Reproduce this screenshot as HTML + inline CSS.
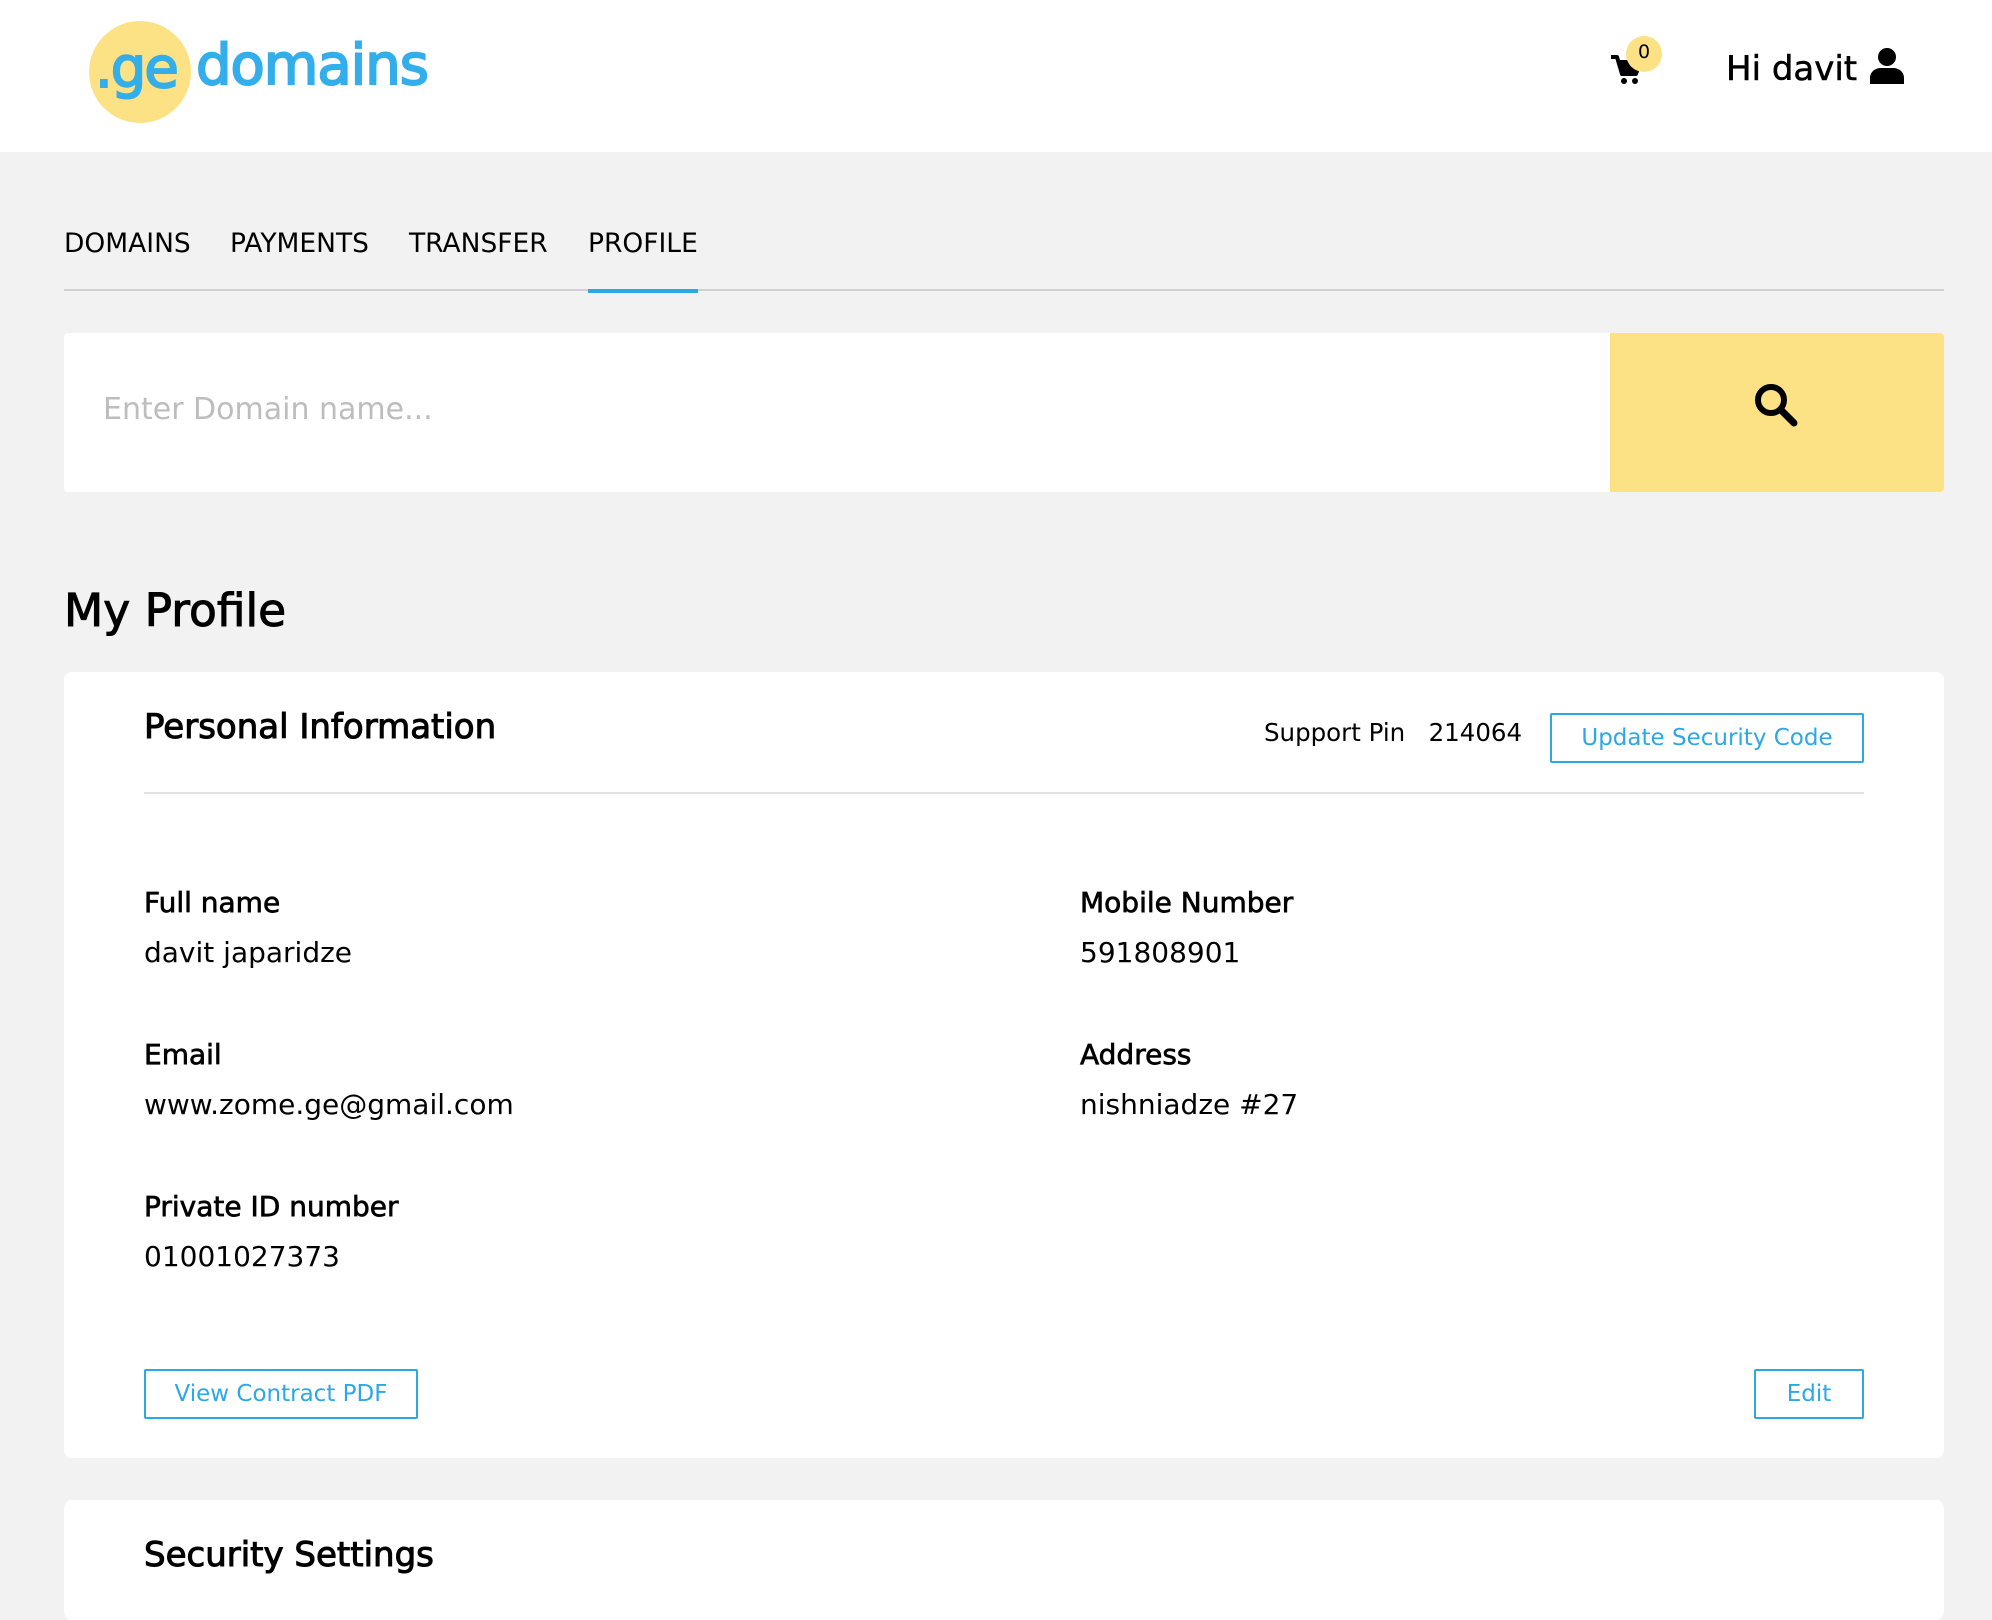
<!DOCTYPE html>
<html><head><meta charset="utf-8"><style>
*{margin:0;padding:0;box-sizing:border-box}
body{width:1992px;height:1582px;overflow:hidden;background:#f2f2f2;font-family:"DejaVu Sans","Liberation Sans",sans-serif;color:#000;position:relative}
.a{position:absolute;white-space:nowrap}
header{position:absolute;left:0;top:0;width:1992px;height:152px;background:#fff}
.btn{position:absolute;border:2px solid #2ea7e6;color:#2ea7e6;font-size:23px;display:flex;align-items:center;justify-content:center;background:#fff;border-radius:2px}
.lbl{font-size:28px;-webkit-text-stroke:0.7px #000}
.val{font-size:28px}
.h{-webkit-text-stroke:1px #000}
</style></head><body>
<header>
 <div class="a" style="left:89px;top:21px;width:102px;height:102px;border-radius:50%;background:#fde285"></div>
 <div class="a" style="left:95px;top:36px;font-size:56px;color:#33aeea;-webkit-text-stroke:2px #33aeea;letter-spacing:-2px">.ge</div>
 <div class="a" style="left:196px;top:33px;font-size:56px;color:#33aeea;-webkit-text-stroke:2px #33aeea;letter-spacing:-1px">domains</div>
 <svg class="a" style="left:1610px;top:54px" width="32" height="32" viewBox="0 0 32 32"><path d="M1 3h6l5 17h14l4-12H10" fill="none" stroke="#000" stroke-width="4" stroke-linejoin="round"/><path d="M10 9h20l-4 11H12z" fill="#000"/><circle cx="14" cy="27" r="3" fill="#000"/><circle cx="25" cy="27" r="3" fill="#000"/></svg>
 <div class="a" style="left:1626px;top:36px;width:36px;height:36px;border-radius:50%;background:#fde285;font-size:19px;text-align:center;line-height:32px">0</div>
 <div class="a" style="left:1726px;top:49px;font-size:34px;-webkit-text-stroke:0.5px #000">Hi davit</div>
 <svg class="a" style="left:1870px;top:48px" width="34" height="36" viewBox="0 0 34 36"><circle cx="17" cy="9" r="9" fill="#000"/><path d="M0 36v-6c0-6 5-10 11-10h12c6 0 11 4 11 10v6z" fill="#000"/></svg>
</header>
<div class="a" style="left:64px;top:228px;font-size:26.5px">DOMAINS</div>
<div class="a" style="left:230px;top:228px;font-size:26.5px">PAYMENTS</div>
<div class="a" style="left:409px;top:228px;font-size:26.5px">TRANSFER</div>
<div class="a" style="left:588px;top:228px;font-size:26.5px">PROFILE</div>
<div class="a" style="left:64px;top:289px;width:1880px;height:2px;background:#d0d0d0"></div>
<div class="a" style="left:588px;top:289px;width:110px;height:4px;background:#2ea7e6"></div>
<div class="a" style="left:64px;top:333px;width:1880px;height:159px;background:#fff;border-radius:4px;overflow:hidden">
 <div class="a" style="left:39px;top:59px;font-size:30px;color:#bdbdbd">Enter Domain name...</div>
 <div class="a" style="left:1546px;top:0;width:334px;height:159px;background:#fde285"></div>
 <svg class="a" style="left:1688px;top:48px" width="48" height="48" viewBox="0 0 48 48"><circle cx="19" cy="19" r="13" fill="none" stroke="#000" stroke-width="6"/><path d="M29 29l13 13" stroke="#000" stroke-width="7" stroke-linecap="round"/></svg>
</div>
<div class="a h" style="left:64px;top:584px;font-size:45.5px">My Profile</div>
<div class="a" style="left:64px;top:672px;width:1880px;height:786px;background:#fff;border-radius:8px">
 <div class="a h" style="left:80px;top:35px;font-size:34px">Personal Information</div>
 <div class="a" style="left:1200px;top:46px;font-size:24.5px">Support Pin&nbsp;&nbsp;&nbsp;214064</div>
 <div class="btn" style="left:1486px;top:41px;width:314px;height:50px">Update Security Code</div>
 <div class="a" style="left:80px;top:120px;width:1720px;height:2px;background:#e2e2e2"></div>
 <div class="a lbl" style="left:80px;top:214px">Full name</div>
 <div class="a val" style="left:80px;top:264px">davit japaridze</div>
 <div class="a lbl" style="left:1016px;top:214px">Mobile Number</div>
 <div class="a val" style="left:1016px;top:264px">591808901</div>
 <div class="a lbl" style="left:80px;top:366px">Email</div>
 <div class="a val" style="left:80px;top:416px">www.zome.ge@gmail.com</div>
 <div class="a lbl" style="left:1016px;top:366px">Address</div>
 <div class="a val" style="left:1016px;top:416px">nishniadze #27</div>
 <div class="a lbl" style="left:80px;top:518px">Private ID number</div>
 <div class="a val" style="left:80px;top:568px">01001027373</div>
 <div class="btn" style="left:80px;top:697px;width:274px;height:50px">View Contract PDF</div>
 <div class="btn" style="left:1690px;top:697px;width:110px;height:50px">Edit</div>
</div>
<div class="a" style="left:64px;top:1500px;width:1880px;height:120px;background:#fff;border-radius:8px">
 <div class="a h" style="left:80px;top:35px;font-size:34px">Security Settings</div>
</div>
</body></html>
